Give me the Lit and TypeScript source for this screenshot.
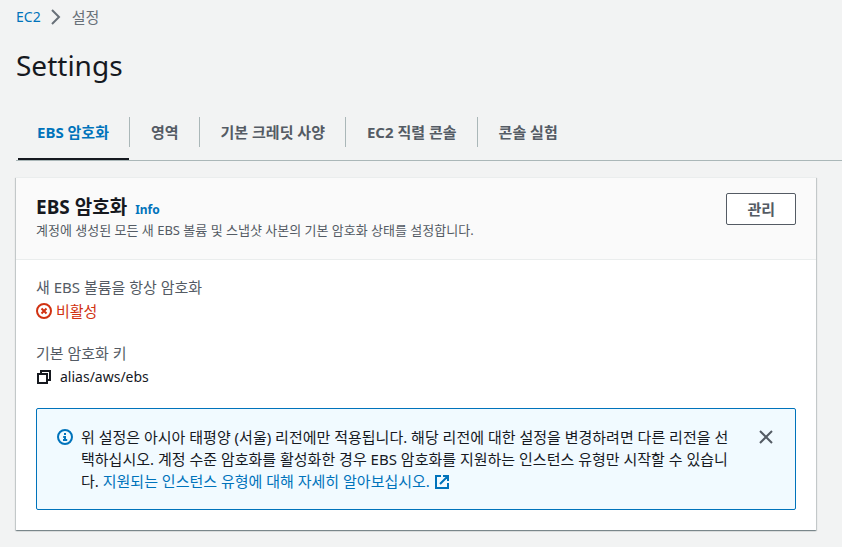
import { LitElement, css, html, svg } from "lit";
import { customElement, state } from "lit/decorators.js";
import { classMap } from "lit/directives/class-map.js";

const TABS = ["EBS 암호화", "영역", "기본 크레딧 사양", "EC2 직렬 콘솔", "콘솔 실험"];

const icon = (name: string, size: number, body: unknown) => html`
  <svg class="icon ${name}" width=${size} height=${size} viewBox="0 0 16 16" aria-hidden="true">${body}</svg>
`;

const chevron = icon("chevron", 16, svg`<path d="M4 1l7 7-7 7" />`);
const statusOff = icon("off", 16, svg`<circle cx="8" cy="8" r="7" /><path d="M5.5 5.5l5 5M10.5 5.5l-5 5" />`);
const copy = icon("copy", 16, svg`<path d="M2 5h9v9H2zM5 5V2h9v9h-3" />`);
const info = icon(
  "info",
  16,
  svg`<circle cx="8" cy="8" r="7" /><path d="M8 11V8H6.2M6 11h4.2M8 4v2" />`,
);
const external = icon("external", 16, svg`<path d="M7 2H2v12h12V9M9 2h5v5M14 2L6 10" />`);
const close = icon("close", 16, svg`<path d="M2 2l12 12M14 2L2 14" />`);

@customElement("app-root")
export class AppRoot extends LitElement {
  @state() private active = 0;
  @state() private noticeOpen = true;

  static styles = css`
    :host {
      display: block;
      box-sizing: border-box;
      min-height: 100vh;
      padding: 6px 0 16px 16px;
      background: #f2f3f3;
      color: #16191f;
      font: 15px/22px "Noto Sans", "Noto Sans CJK KR", sans-serif;
    }
    * {
      box-sizing: border-box;
    }
    a {
      color: #0073bb;
      text-decoration: none;
    }
    button {
      font: inherit;
      margin: 0;
      cursor: pointer;
    }
    h1,
    h2,
    p,
    dl,
    dd,
    ol {
      margin: 0;
      padding: 0;
    }
    .icon {
      flex: none;
      fill: none;
      stroke: currentColor;
      stroke-width: 2;
    }
    .latin {
      font-size: 14px;
    }
    .crumbs {
      display: flex;
      align-items: center;
      gap: 8px;
      list-style: none;
      color: #687078;
    }
    .crumbs li {
      display: flex;
      align-items: center;
      gap: 7px;
    }
    .chevron {
      color: #687078;
    }
    h1 {
      margin-top: 19px;
      font-size: 28px;
      line-height: 36px;
      font-weight: 400;
    }
    .tabs {
      display: flex;
      margin-top: 23px;
      padding-left: 1px;
      border-bottom: 1px solid #aab7b8;
    }
    .tab {
      position: relative;
      height: 54px;
      padding: 0 20px 2px;
      border: 0;
      background: none;
      color: #545b64;
      font-weight: 700;
      white-space: nowrap;
    }
    .tab + .tab {
      padding-left: 22px;
    }
    .tab + .tab::before {
      content: "";
      position: absolute;
      left: 0;
      top: 11px;
      height: 30px;
      border-left: 1px solid #aab7b8;
    }
    .tab.active {
      color: #0073bb;
    }
    .tab.active::after {
      content: "";
      position: absolute;
      left: 1px;
      right: 0;
      bottom: 0;
      height: 2px;
      background: #16191f;
    }
    .panel {
      margin: 16px 26px 0 0;
      background: #fff;
      box-shadow: 0 1px 1px 0 rgba(0, 28, 36, 0.3), 1px 1px 1px 0 rgba(0, 28, 36, 0.15),
        -1px 1px 1px 0 rgba(0, 28, 36, 0.15);
      border-top: 1px solid #eaeded;
    }
    .head {
      display: flex;
      justify-content: space-between;
      align-items: flex-start;
      gap: 16px;
      padding: 15px 20px 20px;
      background: #fafafa;
      border-bottom: 1px solid #eaeded;
    }
    .title {
      display: flex;
      align-items: baseline;
      gap: 8px;
    }
    h2 {
      font-size: 19px;
      line-height: 28px;
      font-weight: 700;
    }
    .info-link {
      font-size: 12px;
      line-height: 20px;
      font-weight: 700;
    }
    .hint {
      color: #545b64;
      font-size: 13px;
      line-height: 18px;
    }
    .manage {
      height: 32px;
      padding: 0 20px;
      border: 1px solid #545b64;
      border-radius: 2px;
      background: #fff;
      color: #545b64;
      font-weight: 700;
    }
    .body {
      padding: 16px 20px 20px;
    }
    dt {
      color: #545b64;
    }
    dd {
      display: flex;
      align-items: center;
      gap: 4px;
      margin: 2px 0 20px;
    }
    dd.disabled {
      color: #d13212;
    }
    dd.key {
      gap: 8px;
    }
    .copy-btn,
    .close-btn {
      display: flex;
      padding: 0;
      border: 0;
      background: none;
      color: #16191f;
    }
    .notice {
      display: flex;
      align-items: flex-start;
      gap: 8px;
      padding: 17px 20px;
      border: 1px solid #0073bb;
      border-radius: 2px;
      background: #f1faff;
    }
    .info {
      margin-top: 3px;
      color: #0073bb;
    }
    .notice p {
      flex: 1;
    }
    .external {
      vertical-align: -3px;
    }
    .close-btn {
      margin: 3px 1px 0 16px;
      color: #545b64;
    }
  `;

  render() {
    return html`
      <nav aria-label="breadcrumb">
        <ol class="crumbs">
          <li><a class="latin" href="#ec2">EC2</a>${chevron}</li>
          <li aria-current="page">설정</li>
        </ol>
      </nav>
      <h1>Settings</h1>
      <div class="tabs" role="tablist">
        ${TABS.map(
          (label, i) => html`<button
            class=${classMap({ tab: true, active: i === this.active })}
            role="tab"
            aria-selected=${i === this.active}
            @click=${() => (this.active = i)}
          >${label}</button>`,
        )}
      </div>
      <section class="panel">
        <header class="head">
          <div>
            <div class="title">
              <h2>EBS 암호화</h2>
              <a class="info-link" href="#info">Info</a>
            </div>
            <p class="hint">계정에 생성된 모든 새 EBS 볼륨 및 스냅샷 사본의 기본 암호화 상태를 설정합니다.</p>
          </div>
          <button class="manage">관리</button>
        </header>
        <div class="body">
          <dl>
            <dt>새 EBS 볼륨을 항상 암호화</dt>
            <dd class="disabled">${statusOff}<span>비활성</span></dd>
            <dt>기본 암호화 키</dt>
            <dd class="key"><button class="copy-btn" aria-label="복사">${copy}</button><span class="latin">alias/aws/ebs</span></dd>
          </dl>
          ${this.noticeOpen
            ? html`<div class="notice">
                ${info}
                <p>위 설정은 아시아 태평양 (서울) 리전에만 적용됩니다. 해당 리전에 대한 설정을 변경하려면 다른 리전을 선택하십시오. 계정 수준 암호화를 활성화한 경우 EBS 암호화를 지원하는 인스턴스 유형만 시작할 수 있습니다. <a href="#instances">지원되는 인스턴스 유형에 대해 자세히 알아보십시오. ${external}</a></p>
                <button class="close-btn" aria-label="닫기" @click=${() => (this.noticeOpen = false)}>${close}</button>
              </div>`
            : null}
        </div>
      </section>
    `;
  }
}
